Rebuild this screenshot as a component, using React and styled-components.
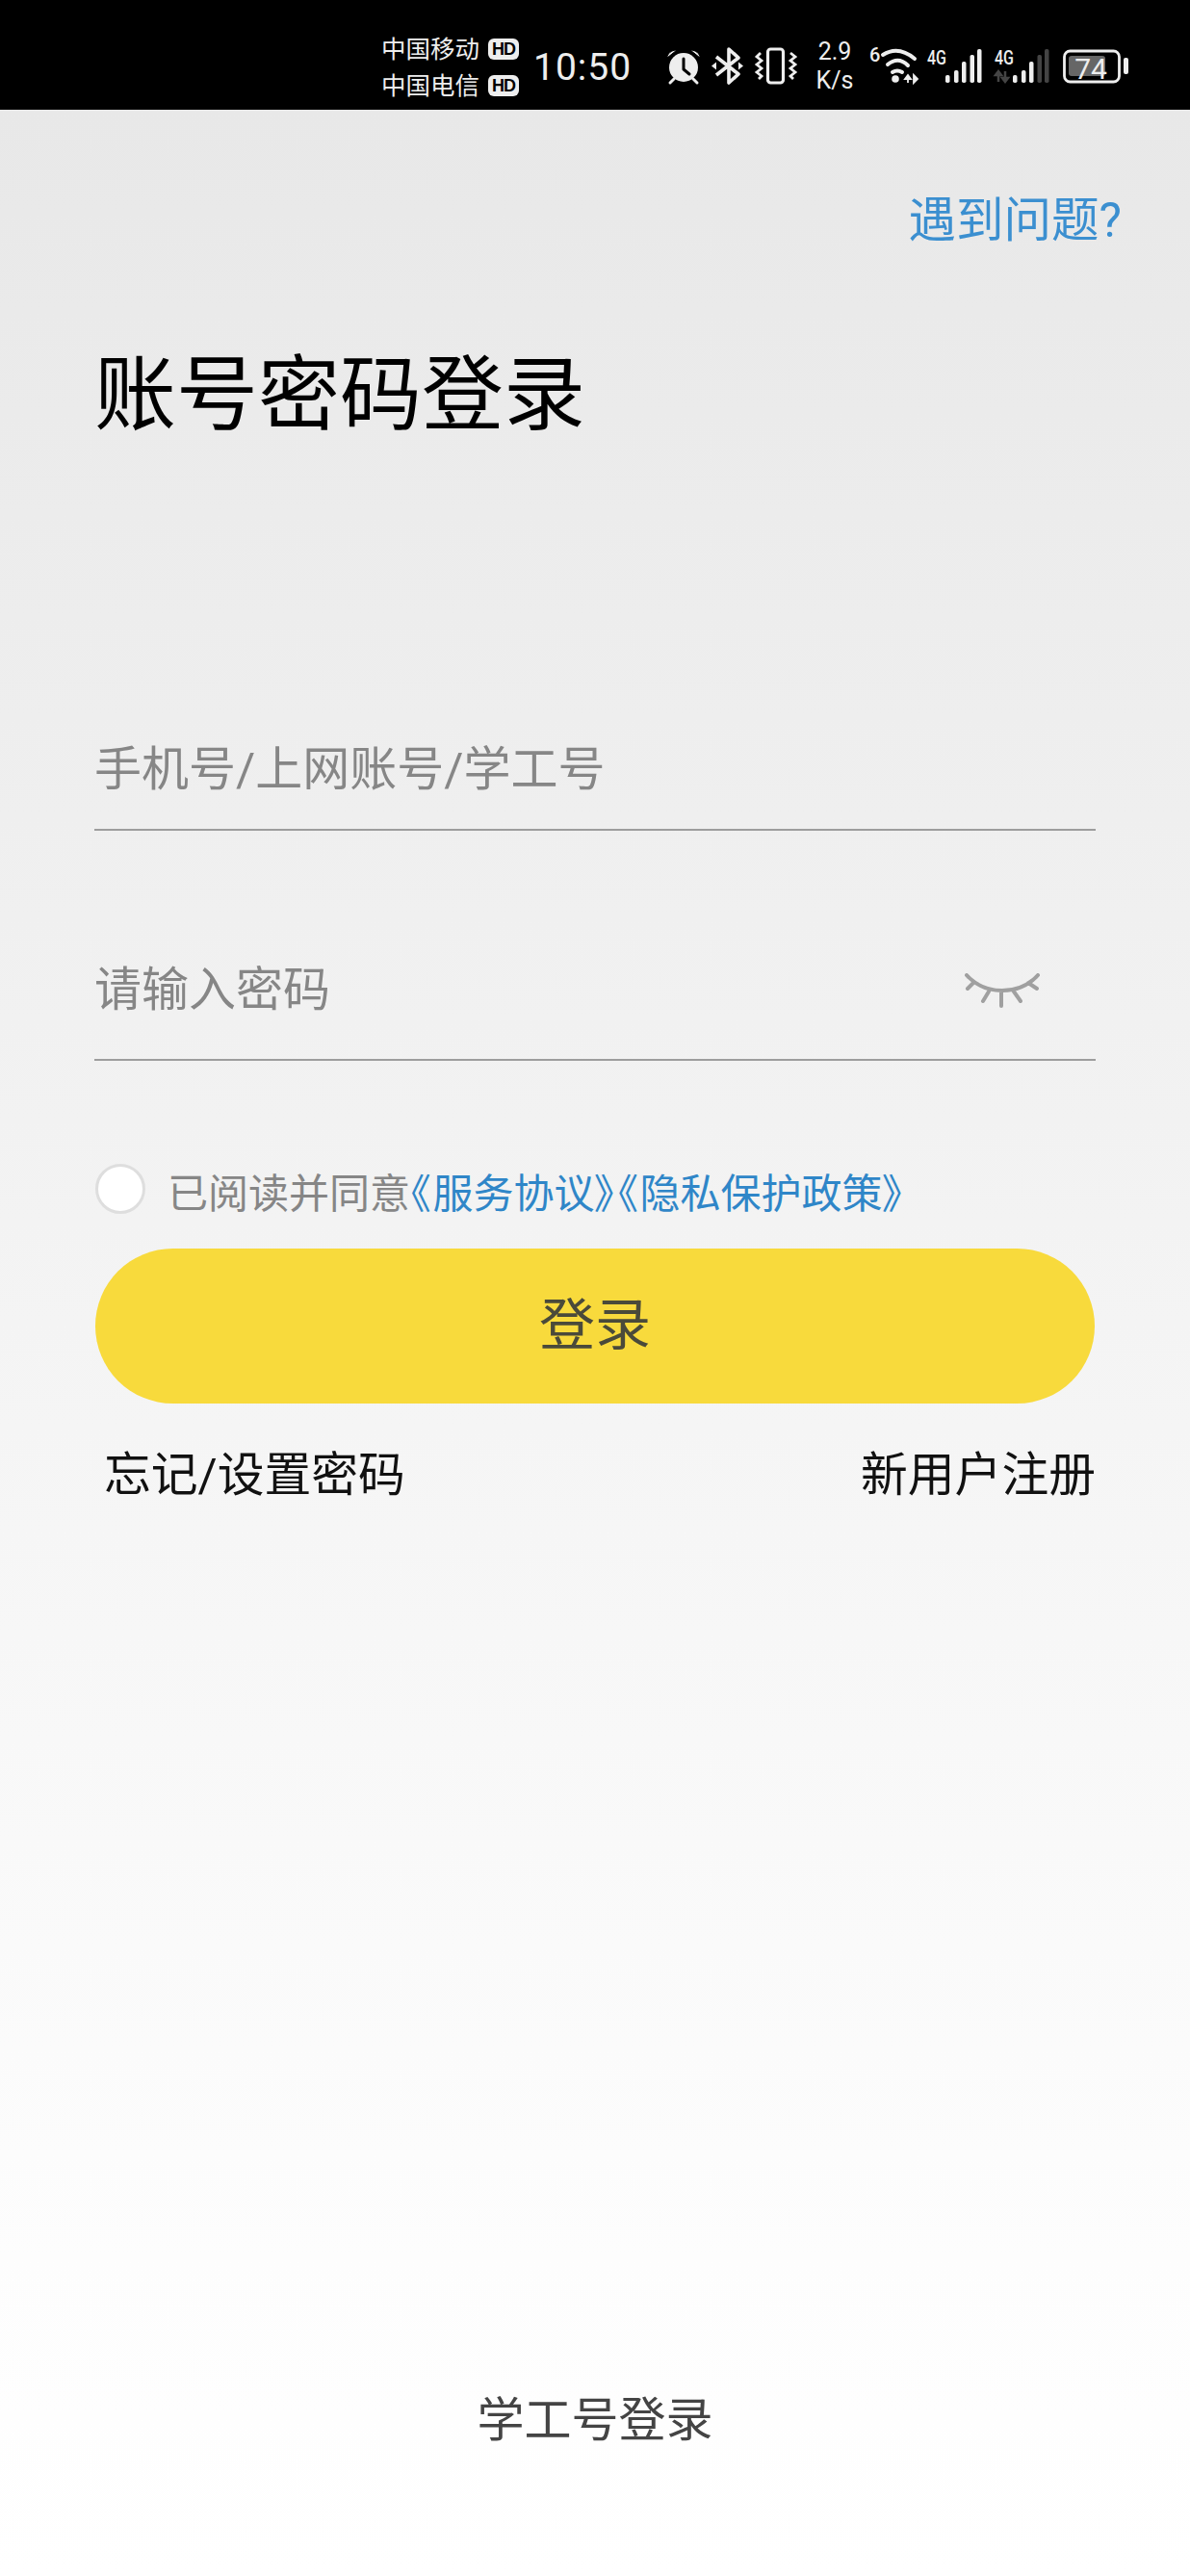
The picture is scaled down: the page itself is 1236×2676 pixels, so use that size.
import React from "react";
import styled, { createGlobalStyle } from "styled-components";

const Global = createGlobalStyle`
  html, body { margin: 0; padding: 0; background: #fff; }
  * { box-sizing: border-box; }
`;
const CJK = `Roboto, "Noto Sans CJK SC", sans-serif`;

const Page = styled.div`
  width: 1236px; height: 2676px; display: flex; flex-direction: column;
  font-family: ${CJK}; overflow: hidden;
`;
const StatusBar = styled.div`
  height: 114px; flex: none; background: #000; color: #eee;
  display: flex; align-items: center; padding: 24px 0 0 396px;
`;
const Carriers = styled.div`
  display: flex; flex-direction: column; gap: 8px; width: 158px; margin-top: 1px;
`;
const Carrier = styled.div`
  display: flex; align-items: center; gap: 9px; font-size: 25.500px; line-height: 30px;
`;
const HD = styled.span`
  width: 32px; height: 22px; border-radius: 6px; background: #eee; color: #000;
  font-size: 18px; line-height: 22px; font-weight: 700; text-align: center;
  font-family: "Liberation Sans", sans-serif; letter-spacing: -1px;
`;
const Time = styled.div`
  font-size: 39px; line-height: 44px; letter-spacing: 1px; width: 138px; margin-top: 2px; font-weight: 400;
`;
const Icon = styled.svg`
  flex: none; display: block; overflow: visible; margin-left: ${p => p.$ml || 0}px;
`;
const Speed = styled.div`
  width: 42px; margin-left: 18px; text-align: center; font-size: 25px; line-height: 30px; flex: none;
`;
const Content = styled.div`
  flex: 1; display: flex; flex-direction: column; padding: 0 98px 0 98px;
  background: linear-gradient(180deg, #e8e8e8 0%, #f3f3f3 45%, #fdfdfd 87%, #ffffff 100%);
`;
const Help = styled.a`
  align-self: flex-end; margin: 88px -27px 0 0; font-size: 49.500px; line-height: 54px; color: #3b8fd0;
`;
const Title = styled.h1`
  margin: 105px 0 0 0; font-size: 85px; line-height: 100px; font-weight: 400; color: #000;
`;
const Field = styled.div`
  display: flex; align-items: center; justify-content: space-between;
  border-bottom: 2px solid #9d9d9d; margin-top: ${p => p.$mt}px; height: ${p => p.$h}px;
  padding: 0 58px ${p => p.$pb}px 0; width: 1040px;
`;
const Placeholder = styled.span`
  font-size: 49px; line-height: 56px; color: #868686;
`;
const Agree = styled.div`
  display: flex; align-items: center; margin: 111px 0 0 1px; height: 56px;
`;
const Radio = styled.span`
  width: 52px; height: 52px; border-radius: 50%; background: #fff; border: 3px solid #dedede; flex: none; margin-top: -12px;
`;
const AgreeText = styled.span`
  margin-left: 23px; font-size: 42px; line-height: 56px; color: #868686; white-space: nowrap;
  text-spacing-trim: space-all;
`;
const Link = styled.span` color: #2f86c8; `;
const Bracket = styled.span`
  font-feature-settings: "palt"; letter-spacing: 2.500px;
`;
const LoginBtn = styled.button`
  display: block; width: 1038px; height: 161px; margin: 28px 0 0 1px; border: none; border-radius: 81px;
  background: #f8da3c; color: #4a4a3a; font-family: ${CJK}; font-size: 58px; line-height: 161px; padding: 0;
`;
const Links = styled.div`
  display: flex; justify-content: space-between; margin: 47px 0 0 10px; width: 1030px;
  font-size: 48.800px; line-height: 56px; color: #111;
`;
const Spacer = styled.div` flex: 1; `;
const Bottom = styled.div`
  text-align: center; font-size: 49px; line-height: 56px; color: #444; margin: 0 0 133px; width: 1040px;
`;

const Alarm = () => (
  <Icon width="36" height="40" viewBox="0 0 36 40">
    <circle cx="18" cy="21" r="15" fill="#eee" />
    <path d="M18 12v11l6 5" fill="none" stroke="#000" strokeWidth="3" strokeLinecap="round" strokeLinejoin="round" />
    <path d="M1 11c0-4 4-8 10-8zM35 11c0-4-4-8-10-8z" fill="#eee" stroke="#000" strokeWidth="1" />
    <path d="M8 33l-4 4M28 33l4 4" stroke="#eee" strokeWidth="3" fill="none" strokeLinecap="round" />
  </Icon>
);
const Bluetooth = () => (
  <Icon width="33" height="40" viewBox="0 0 33 40" $ml={11}>
    <path d="M5 10l23 18-10 9V2l10 9L5 29" fill="none" stroke="#eee" strokeWidth="3.6" strokeLinejoin="round" />
    <path d="M0 19.500l5-4v8zM33 19.500l-5-4v8z" fill="#eee" />
  </Icon>
);
const Vibrate = () => (
  <Icon width="44" height="40" viewBox="0 0 44 40" $ml={12}>
    <rect x="13.500" y="2" width="16" height="35" rx="3" fill="none" stroke="#eee" strokeWidth="3.200" />
    <path d="M6 6l-4 4 5 4-5 4 5 4-5 4 5 4-3 3M37 6l5 4-5 4 5 4-5 4 5 4-5 4 3 3" fill="none" stroke="#eee" strokeWidth="2.800" />
  </Icon>
);
const Wifi = () => (
  <Icon width="52" height="50" viewBox="0 -5 52 50" $ml={15}>
    <text x="0" y="15" fill="#eee" fontSize="20" fontFamily="Roboto, sans-serif" fontWeight="500">6</text>
    <path d="M14 8Q30-2 47 12M19 18Q30 9 40 19M24 26Q29 23 34 26" fill="none" stroke="#eee" strokeWidth="4" strokeLinecap="round" />
    <circle cx="27" cy="33" r="3.800" fill="#eee" />
    <path d="M40 37V30M37 33l3-4 3 4zM46 29v8l4-4z" stroke="#eee" strokeWidth="1.800" fill="#eee" />
  </Icon>
);
const barX = [20, 29, 37, 45.5, 53];
const barY = [29, 24, 15, 8, 2];
const Signal = ({ ml, dim }) => (
  <Icon width="60" height="40" viewBox="0 0 60 40" $ml={ml}>
    <text x="1" y="18" fill="#eee" fontSize="21" fontWeight="500" fontFamily="Roboto, sans-serif" textLength="20" lengthAdjust="spacingAndGlyphs">4G</text>
    {dim && <path d="M5 36V27M2 29l3-4 3 4zM12 25v9M9 32l3 4 3-4z" stroke="#444" strokeWidth="2.500" fill="#444" />}
    {barX.map((x, i) => (
      <rect key={x} x={x} y={barY[i]} width="4.500" height={37 - barY[i]} rx="1.800" fill={dim && i >= 3 ? "#444" : "#eee"} />
    ))}
  </Icon>
);
const Battery = () => (
  <Icon width="70" height="40" viewBox="0 0 70 40" $ml={11}>
    <rect x="2.500" y="4" width="57" height="32" rx="6" fill="none" stroke="#eee" strokeWidth="2.800" />
    <rect x="7" y="9" width="38" height="21" rx="3" fill="#666" />
    <text x="30" y="33" textAnchor="middle" fill="#eee" fontSize="30" fontFamily="Roboto, sans-serif">74</text>
    <rect x="64" y="11" width="5" height="17" rx="2" fill="#eee" />
  </Icon>
);
const Eye = () => (
  <svg width="78" height="36" viewBox="0 0 78 36" style={{ display: "block" }}>
    <path d="M2 2c10 11 22 16 37 16s27-5 37-16M9 10l-6 6M25 19l-6 10M38 20v14M51 19l7 10M66 10l9 6" fill="none" stroke="#a0a0a0" strokeWidth="4" strokeLinecap="round" />
  </svg>
);

export default function App() {
  return (
    <Page>
      <Global />
      <StatusBar>
        <Carriers>
          <Carrier>中国移动<HD>HD</HD></Carrier>
          <Carrier>中国电信<HD>HD</HD></Carrier>
        </Carriers>
        <Time>10:50</Time>
        <Alarm />
        <Bluetooth />
        <Vibrate />
        <Speed>2.9<br />K/s</Speed>
        <Wifi />
        <Signal ml={7} />
        <Signal ml={10} dim />
        <Battery />
      </StatusBar>
      <Content>
        <Help>遇到问题?</Help>
        <Title>账号密码登录</Title>
        <Field $mt={287} $h={115} $pb={10}><Placeholder>手机号/上网账号/学工号</Placeholder></Field>
        <Field $mt={102} $h={137} $pb={8}>
          <Placeholder>请输入密码</Placeholder>
          <Eye />
        </Field>
        <Agree>
          <Radio />
          <AgreeText>
            已阅读并同意
            <Link>
              <Bracket>《</Bracket>服务协议<Bracket>》《</Bracket>隐私保护政策<Bracket>》</Bracket>
            </Link>
          </AgreeText>
        </Agree>
        <LoginBtn>登录</LoginBtn>
        <Links><span>忘记/设置密码</span><span>新用户注册</span></Links>
        <Spacer />
        <Bottom>学工号登录</Bottom>
      </Content>
    </Page>
  );
}
